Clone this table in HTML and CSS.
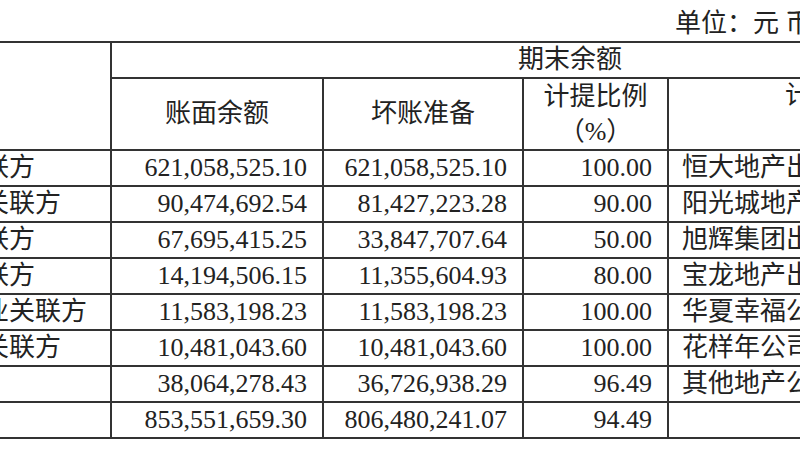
FILE: index.html
```html
<!DOCTYPE html>
<html lang="zh-CN">
<head>
<meta charset="utf-8">
<title>应收账款坏账准备</title>
<link rel="stylesheet" href="styles.css">
</head>
<body>
<div class="page">
  <div class="unit">单位：元 币种：人民币</div>
  <table class="sheet">
    <colgroup>
      <col class="c-name"><col class="c-book"><col class="c-bad"><col class="c-ratio"><col class="c-reason">
    </colgroup>
    <thead>
      <tr class="h1"><th rowspan="2" class="name-h"></th><th colspan="4" class="span-h">期末余额</th></tr>
      <tr class="h2"><th>账面余额</th><th>坏账准备</th><th class="two">计提比例<br>（%）</th><th class="reason-h">计提理由</th></tr>
    </thead>
    <tbody>
      <tr><td class="name">恒大地产关联方</td><td class="num">621,058,525.10</td><td class="num">621,058,525.10</td><td class="num">100.00</td><td class="reason">恒大地产出现债务违约</td></tr>
      <tr><td class="name">阳光城地产关联方</td><td class="num">90,474,692.54</td><td class="num">81,427,223.28</td><td class="num">90.00</td><td class="reason">阳光城地产出现债务违约</td></tr>
      <tr><td class="name">旭辉集团关联方</td><td class="num">67,695,415.25</td><td class="num">33,847,707.64</td><td class="num">50.00</td><td class="reason">旭辉集团出现债务违约</td></tr>
      <tr><td class="name">宝龙地产关联方</td><td class="num">14,194,506.15</td><td class="num">11,355,604.93</td><td class="num">80.00</td><td class="reason">宝龙地产出现债务违约</td></tr>
      <tr><td class="name">华夏幸福基业关联方</td><td class="num">11,583,198.23</td><td class="num">11,583,198.23</td><td class="num">100.00</td><td class="reason">华夏幸福公司出现债务违约</td></tr>
      <tr><td class="name">花样年控股关联方</td><td class="num">10,481,043.60</td><td class="num">10,481,043.60</td><td class="num">100.00</td><td class="reason">花样年公司出现债务违约</td></tr>
      <tr><td class="name">其他</td><td class="num">38,064,278.43</td><td class="num">36,726,938.29</td><td class="num">96.49</td><td class="reason">其他地产公司出现债务违约</td></tr>
      <tr><td class="name">合计</td><td class="num">853,551,659.30</td><td class="num">806,480,241.07</td><td class="num">94.49</td><td class="reason"></td></tr>
    </tbody>
  </table>
</div>
</body>
</html>
```
FILE: styles.css
```css
html, body {
  margin: 0;
  padding: 0;
  background: #fff;
}
body {
  width: 800px;
  height: 450px;
  overflow: hidden;
  font-family: "Liberation Serif", "Noto Sans CJK SC", serif;
  font-size: 26px;
  color: #222;
}
.page {
  width: 800px;
  height: 450px;
  overflow: hidden;
}
.unit {
  height: 41px;
  box-sizing: border-box;
  padding: 9px 0 0 675px;
  line-height: 30px;
  white-space: nowrap;
}
.sheet {
  border-collapse: collapse;
  table-layout: fixed;
  width: 1182px;
  margin-left: -153px;
}
.c-name { width: 264px; }
.c-book { width: 212px; }
.c-bad { width: 200px; }
.c-ratio { width: 145px; }
.c-reason { width: 361px; }
.sheet th,
.sheet td {
  border: 2px solid #333;
  padding: 0;
  font-weight: normal;
  white-space: nowrap;
  overflow: hidden;
  line-height: 34px;
}
.sheet .name-h { border-left: none; }
.sheet .h1 th { height: 34px; }
.sheet .h2 th { height: 68px; }
.sheet .two { line-height: 35px; }
.sheet .reason-h {
  text-align: left;
  vertical-align: top;
  padding-left: 116px;
  padding-top: 0;
}
.sheet tbody td { height: 34px; }
.sheet td.name {
  text-align: left;
  padding-left: 6px;
  border-left: none;
}
.sheet td.num {
  text-align: right;
  padding-right: 15px;
}
.sheet td.reason {
  text-align: left;
  padding-left: 13px;
}
```
